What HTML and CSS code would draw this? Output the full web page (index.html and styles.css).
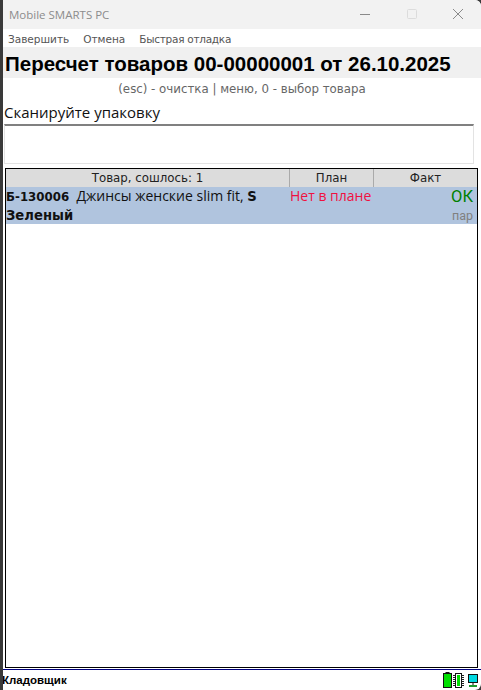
FILE: index.html
```html
<!DOCTYPE html>
<html>
<head>
    <meta charset="UTF-8">
    <title>Mobile SMARTS PC</title>
    <link rel="stylesheet" href="styles.css">
</head>
<body>
<div class="window">
    <div class="title-bar">
        <span class="title-text">Mobile SMARTS PC</span>
        <div class="window-buttons">
            <svg width="46" height="28" viewBox="0 0 46 28"><path d="M17 13.5H27" stroke="#8a8a8a" fill="none"/></svg>
            <svg width="46" height="28" viewBox="0 0 46 28"><rect x="18.5" y="8.5" width="9" height="9" rx="1" stroke="#dcdcdc" fill="none"/></svg>
            <svg width="46" height="28" viewBox="0 0 46 28"><path d="M18 8L28 18M28 8L18 18" stroke="#8a8a8a" fill="none"/></svg>
        </div>
    </div>

    <div class="menu-bar">
        <span>Завершить</span>
        <span>Отмена</span>
        <span class="menu-debug">Быстрая отладка</span>
    </div>

    <div class="doc-title">Пересчет товаров 00-00000001 от 26.10.2025</div>
    <div class="hint">(esc) - очистка | меню, 0 - выбор товара</div>
    <div class="prompt">Сканируйте упаковку</div>
    <div class="scan-input"></div>

    <div class="table">
        <div class="table-head">
            <div class="col-name">Товар, сошлось: 1</div>
            <div class="col-plan">План</div>
            <div class="col-fact">Факт</div>
        </div>
        <div class="table-row">
            <div class="row-name"><b class="code">Б-130006</b>&nbsp; Джинсы женские slim fit, <b class="bold-serif">S</b><br><b class="bold-serif">Зеленый</b></div>
            <div class="row-plan">Нет в плане</div>
            <div class="row-fact">
                <span class="ok">ОК</span>
                <span class="unit">пар</span>
            </div>
        </div>
    </div>

    <div class="status-bar">
        <b class="user">Кладовщик</b>
        <div class="status-icons">
            <svg class="icon-battery" width="9" height="16" viewBox="0 0 9 16"><rect x="0.5" y="1.5" width="8" height="14" fill="#00e000" stroke="#111"/><rect x="2.5" y="0" width="4" height="1.5" fill="#111"/></svg>
            <svg class="icon-chip" width="11" height="15" viewBox="0 0 11 15"><path d="M0 2.5H11M0 4.5H11M0 6.5H11M0 8.5H11M0 10.5H11M0 12.5H11" stroke="#222"/><rect x="2.5" y="0.5" width="6" height="14" fill="#fff" stroke="#111"/><rect x="4" y="2" width="3" height="11" fill="#00e000"/></svg>
            <svg width="10" height="13" viewBox="0 0 10 13"><rect x="0.5" y="0.5" width="9" height="8" fill="#00d8e0" stroke="#111"/><path d="M5 9V11" stroke="#111"/><rect x="1" y="11" width="8" height="2" fill="#1a9a2a"/></svg>
        </div>
    </div>
</div>
</body>
</html>
```

FILE: styles.css
```css
html, body {
    margin: 0;
    padding: 0;
    height: 100%;
    background-color: #3a3a3a;
}

body {
    font-family: "DejaVu Sans", sans-serif;
}

.window {
    height: 690px;
    box-sizing: border-box;
    display: flex;
    flex-direction: column;
    overflow: hidden;
    margin-left: 3px;
    border-top-right-radius: 6px;
    border-bottom-right-radius: 6px;
    background-color: #FFFFFF;
}

.title-bar {
    height: 29px;
    flex: none;
    display: flex;
    justify-content: space-between;
    align-items: center;
    background-color: #F2F2F2;
}

.title-text {
    margin-left: 6px;
    font-family: "Open Sans", sans-serif;
    font-size: 11.5px;
    color: #8C8C8C;
}

.window-buttons {
    display: flex;
    height: 28px;
}

.menu-bar {
    height: 18px;
    flex: none;
    display: flex;
    align-items: center;
    gap: 14px;
    padding-left: 5px;
    padding-top: 1px;
    box-sizing: border-box;
    font-size: 10.5px;
    color: #555555;
}

.menu-debug {
    letter-spacing: -0.27px;
}

.doc-title {
    height: 31px;
    flex: none;
    padding-left: 2px;
    line-height: 34px;
    background-color: #F0F0F0;
    font-family: "Liberation Sans", sans-serif;
    font-weight: bold;
    font-size: 20.5px;
    color: #000000;
    white-space: nowrap;
}

.hint {
    height: 22px;
    flex: none;
    line-height: 22px;
    text-align: center;
    font-size: 11.8px;
    color: #666666;
}

.prompt {
    height: 24px;
    flex: none;
    padding-left: 1px;
    line-height: 24px;
    font-family: "Open Sans", sans-serif;
    font-size: 15px;
    color: #111111;
}

.scan-input {
    width: 468px;
    height: 37px;
    flex: none;
    margin-left: 1px;
    border: 1px solid #E3E3E3;
    border-top: 2px solid #808080;
    background-color: #FFFFFF;
}

.table {
    flex: 1;
    margin: 4px 3px 0 2px;
    border: 1px solid #000000;
    background-color: #FFFFFF;
}

.table-head {
    height: 18px;
    display: flex;
    background-color: #DCDCDC;
    font-size: 11.8px;
    line-height: 19px;
    text-align: center;
    color: #222222;
}

.col-name {
    width: 283px;
}

.col-plan {
    width: 83px;
    border-left: 1px solid #AAAAAA;
}

.col-fact {
    flex: 1;
    border-left: 1px solid #AAAAAA;
}

.table-row {
    height: 37px;
    display: flex;
    background-color: #B0C4DE;
}

.row-name {
    width: 284px;
    font-family: "Open Sans", sans-serif;
    font-size: 14px;
    line-height: 18px;
    color: #111111;
}

.code {
    font-family: "DejaVu Sans", sans-serif;
    font-size: 11.8px;
}

.bold-serif {
    font-family: "DejaVu Sans", sans-serif;
    font-size: 13.2px;
}

.row-plan {
    width: 84px;
    font-family: "Open Sans", sans-serif;
    font-size: 14px;
    line-height: 18px;
    color: #F01040;
}

.row-fact {
    flex: 1;
    display: flex;
    flex-direction: column;
    align-items: flex-end;
    padding-right: 4px;
    font-family: Roboto, sans-serif;
}

.ok {
    font-size: 16.5px;
    line-height: 20px;
    color: #008000;
}

.unit {
    font-size: 12.5px;
    line-height: 17px;
    color: #808080;
}

.status-bar {
    height: 21px;
    flex: none;
    display: flex;
    justify-content: space-between;
    align-items: center;
    margin-top: 1px;
    border-top: 1px solid #000080;
    box-sizing: border-box;
}

.user {
    font-family: "Liberation Sans", sans-serif;
    font-size: 11.5px;
    margin-left: -1px;
    color: #000000;
}

.status-icons {
    display: flex;
    align-items: center;
    gap: 1px;
    padding-right: 3px;
}

.icon-chip {
    margin-right: 3px;
}
```
